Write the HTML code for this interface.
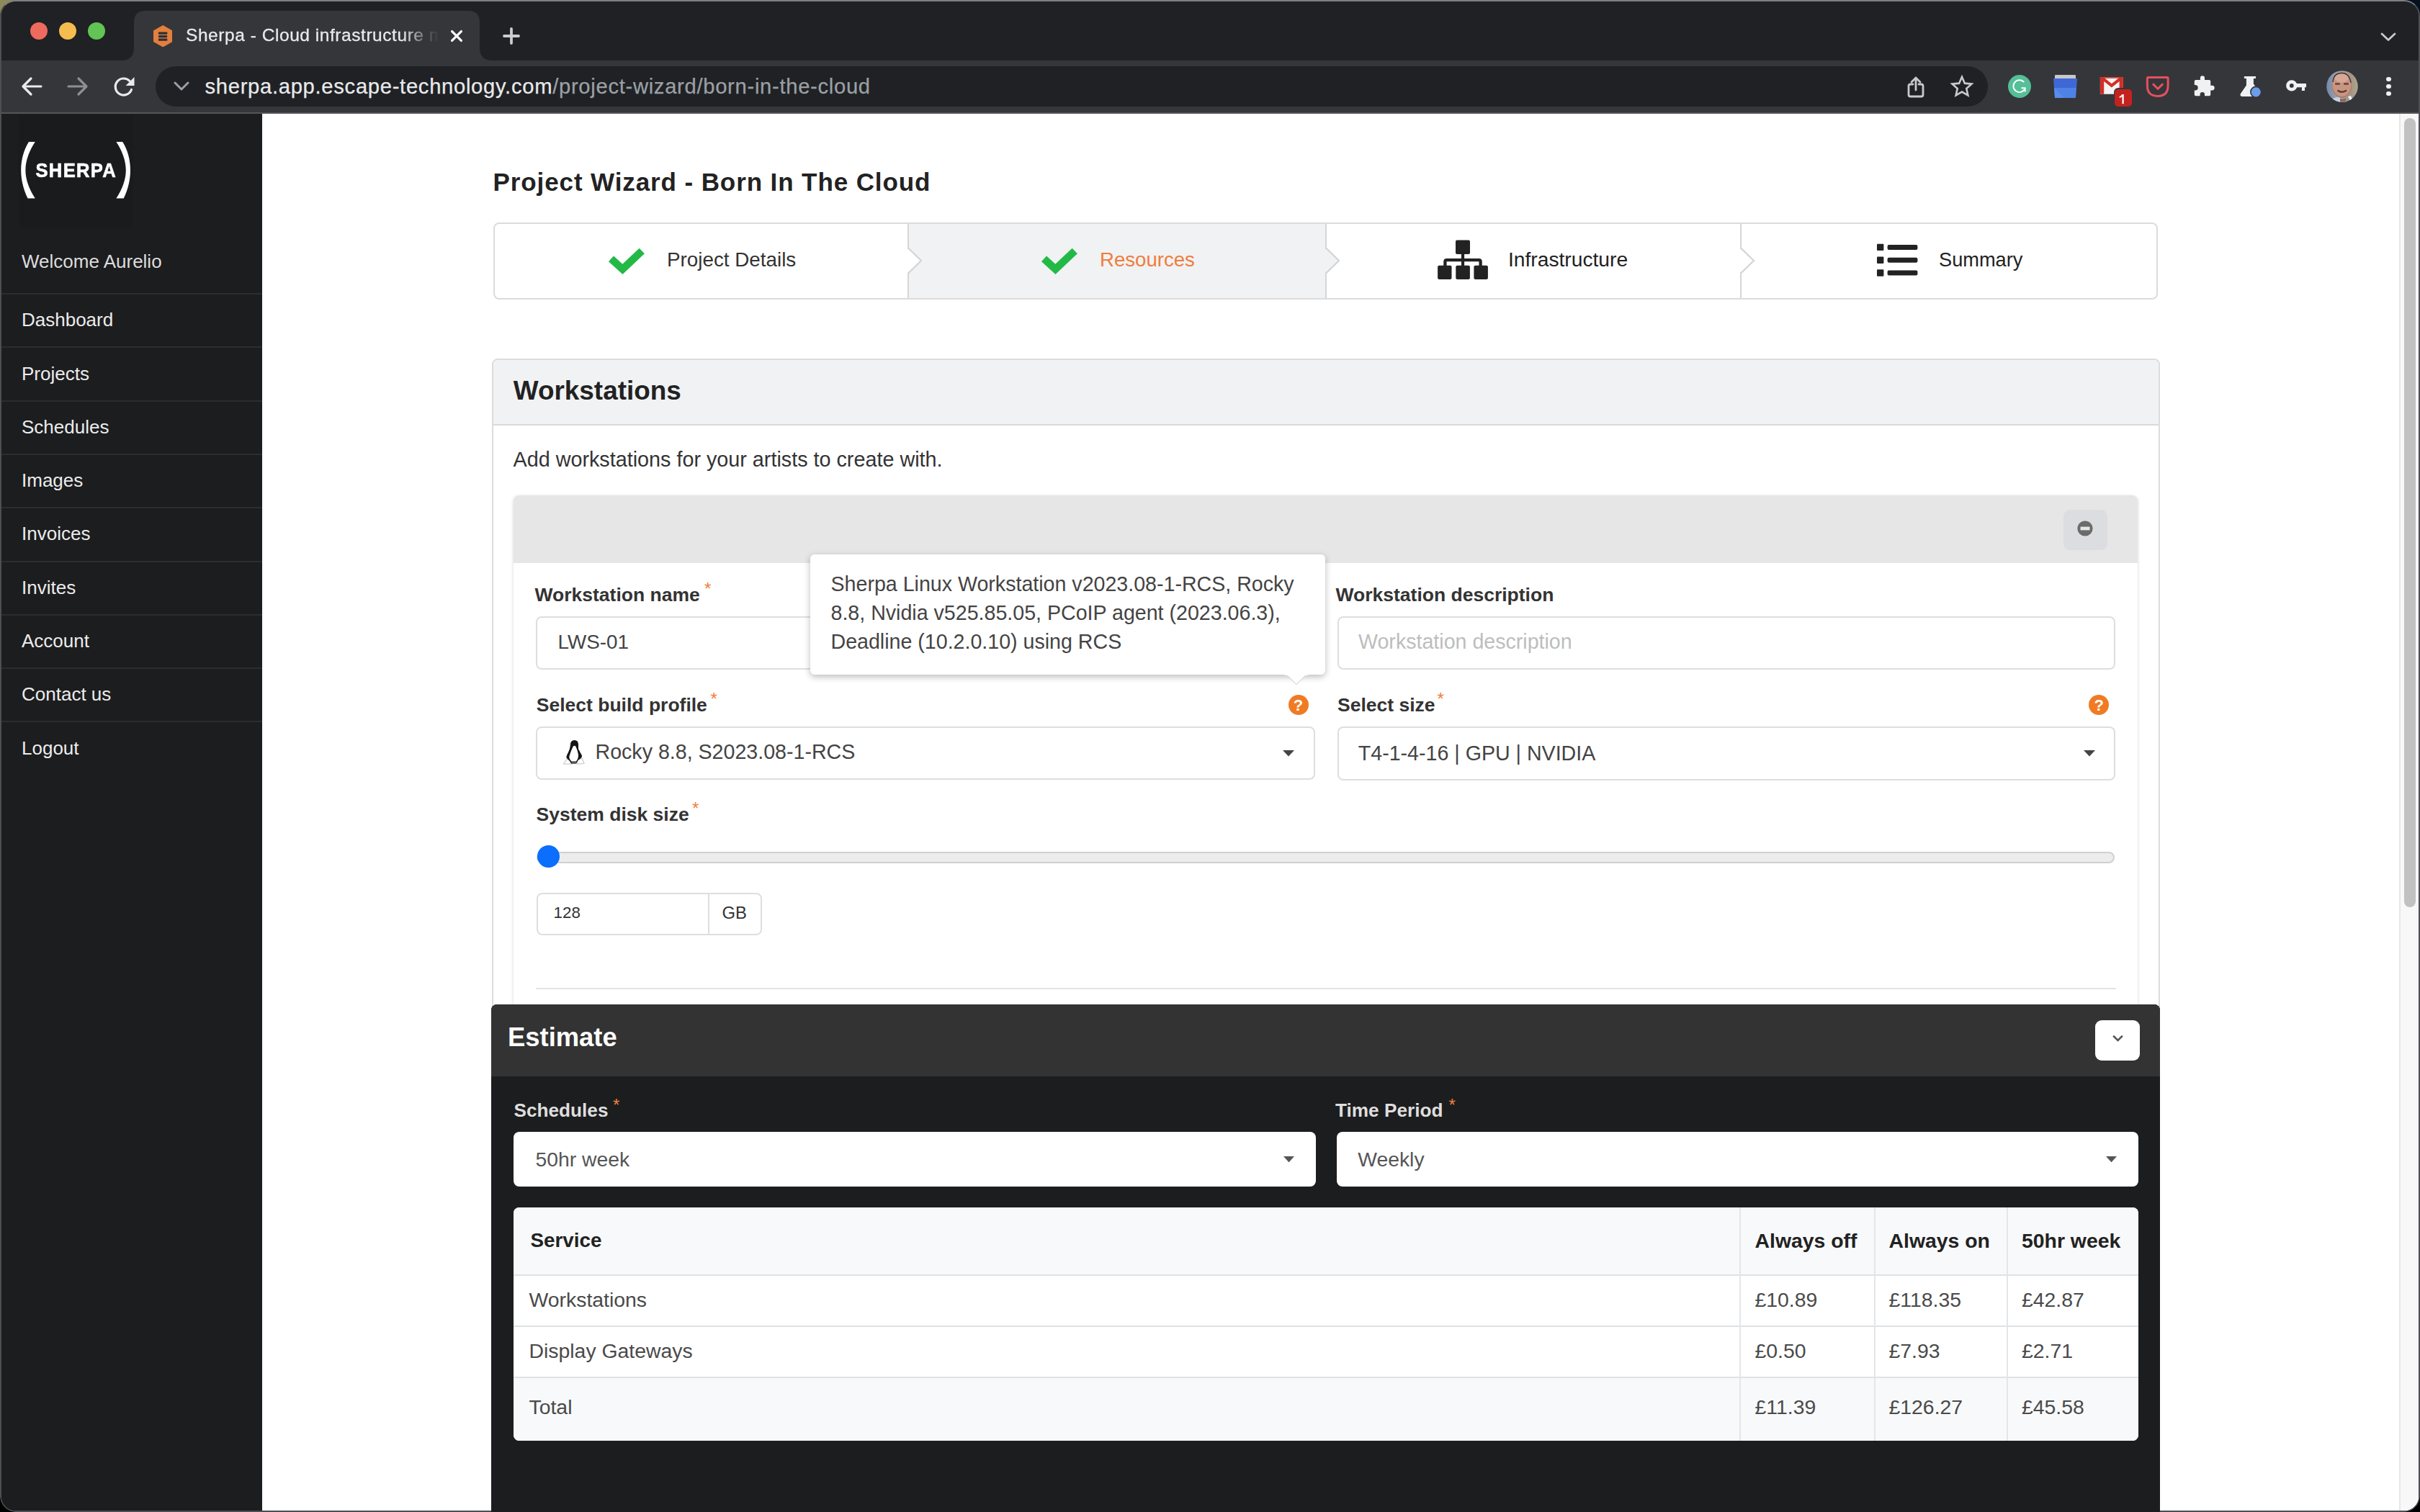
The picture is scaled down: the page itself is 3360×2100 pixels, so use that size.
<!DOCTYPE html>
<html><head><meta charset="utf-8"><title>Sherpa - Project Wizard</title>
<style>
html,body{margin:0;padding:0;width:3360px;height:2100px;overflow:hidden;background:#000}
.r{position:absolute;display:block}
.t{position:absolute;white-space:nowrap;line-height:1;font-family:"Liberation Sans",sans-serif}
</style></head><body>
<div class="r" style="left:0.0px;top:0.0px;width:60.0px;height:60.0px;background:#8c8a5c"></div>
<div class="r" style="left:3300.0px;top:0.0px;width:60.0px;height:60.0px;background:#06101e"></div>
<div class="r" style="left:0.0px;top:0.0px;width:3360.0px;height:2100.0px;border-radius:22px;background:#35363a;border:2px solid #4e4f52;border-top-color:#7e7f82;box-sizing:border-box;overflow:hidden"></div>
<div class="r" style="left:2.0px;top:2.0px;width:3356.0px;height:82.0px;background:#202124;border-radius:20px 20px 0 0"></div>
<div class="r" style="left:41.8px;top:30.8px;width:24.4px;height:24.4px;background:#ee6a5f;border-radius:50%"></div>
<div class="r" style="left:81.8px;top:30.8px;width:24.4px;height:24.4px;background:#f5bd4f;border-radius:50%"></div>
<div class="r" style="left:121.8px;top:30.8px;width:24.4px;height:24.4px;background:#61c454;border-radius:50%"></div>
<svg class="r" style="left:168.0px;top:15.0px;" width="516.0" height="69.0" viewBox="0 0 516 69" preserveAspectRatio="none"><path d="M0 69 Q18 69 18 51 L18 16 Q18 0 34 0 L482 0 Q498 0 498 16 L498 51 Q498 69 516 69 Z" fill="#35363a"/></svg>
<svg class="r" style="left:212.8px;top:34.8px;" width="26.5" height="30.5" viewBox="0 0 26.5 30.5" preserveAspectRatio="none"><path d="M13.25 0 L26.5 7.6 L26.5 22.9 L13.25 30.5 L0 22.9 L0 7.6 Z" fill="#e47f3c"/><rect x="6.9" y="9.6" width="12.4" height="3.1" rx="0.8" fill="#2b313a"/><rect x="6.9" y="14.1" width="12.4" height="3.1" rx="1.5" fill="#2b313a"/><rect x="6.9" y="18.6" width="12.4" height="3.1" rx="0.8" fill="#2b313a"/></svg>
<div class="t" style="left:258.0px;top:37.3px;font-size:24.5px;color:#e8eaed;font-weight:400;letter-spacing:0.55px;-webkit-text-stroke:0.3px #e8eaed;width:352px;overflow:hidden;-webkit-mask-image:linear-gradient(90deg,#000 0,#000 300px,rgba(0,0,0,0.25) 335px,transparent 352px)">Sherpa - Cloud infrastructure m</div>
<svg class="r" style="left:624.0px;top:40.0px;" width="20.0" height="20.0" viewBox="0 0 20 20" preserveAspectRatio="none"><path d="M3.6 3.6 L16.4 16.4 M16.4 3.6 L3.6 16.4" stroke="#f6f7f8" stroke-width="3.3" stroke-linecap="round"/></svg>
<svg class="r" style="left:696.0px;top:36.0px;" width="28.0" height="28.0" viewBox="0 0 28 28" preserveAspectRatio="none"><path d="M14 4 V24 M4 14 H24" stroke="#c9ccd0" stroke-width="3.8" stroke-linecap="round"/></svg>
<svg class="r" style="left:3304.0px;top:44.0px;" width="24.0" height="14.0" viewBox="0 0 24 14" preserveAspectRatio="none"><path d="M3 3 L12 11.5 L21 3" stroke="#c8c9cc" stroke-width="2.8" fill="none" stroke-linecap="round" stroke-linejoin="round"/></svg>
<div class="r" style="left:2.0px;top:84.0px;width:3356.0px;height:72.0px;background:#35363a"></div>
<div class="r" style="left:2.0px;top:156.0px;width:3356.0px;height:2.0px;background:#55565a"></div>
<svg class="r" style="left:28.0px;top:104.0px;" width="32.0" height="32.0" viewBox="0 0 32 32" preserveAspectRatio="none"><path d="M29 16 H5 M15 5 L4 16 L15 27" stroke="#e8eaed" stroke-width="3.2" fill="none" stroke-linecap="round" stroke-linejoin="round"/></svg>
<svg class="r" style="left:92.0px;top:104.0px;" width="32.0" height="32.0" viewBox="0 0 32 32" preserveAspectRatio="none"><path d="M3 16 H27 M17 5 L28 16 L17 27" stroke="#8e8f92" stroke-width="3.2" fill="none" stroke-linecap="round" stroke-linejoin="round"/></svg>
<svg class="r" style="left:156.0px;top:104.0px;" width="34.0" height="32.0" viewBox="0 0 34 32" preserveAspectRatio="none"><path d="M26.5 20.5 A11.5 11.5 0 1 1 24 8.5" stroke="#e8eaed" stroke-width="3.2" fill="none" stroke-linecap="round"/><path d="M30.5 3 L30.5 15 L18.5 15 Z" fill="#e8eaed"/></svg>
<div class="r" style="left:216.0px;top:92.0px;width:2544.0px;height:56.0px;background:#202124;border-radius:28px"></div>
<svg class="r" style="left:240.0px;top:112.0px;" width="24.0" height="16.0" viewBox="0 0 24 16" preserveAspectRatio="none"><path d="M3 3 L12 12 L21 3" stroke="#9aa0a6" stroke-width="3" fill="none" stroke-linecap="round" stroke-linejoin="round"/></svg>
<div class="t" style="left:284.5px;top:105.5px;font-size:29.2px;color:#e8eaed;letter-spacing:0.7px;-webkit-text-stroke:0.25px currentColor">sherpa.app.escape-technology.com<span style="color:#9aa0a6">/project-wizard/born-in-the-cloud</span></div>
<svg class="r" style="left:2646.0px;top:104.0px;" width="28.0" height="34.0" viewBox="0 0 28 34" preserveAspectRatio="none"><path d="M14 4 V21 M8 10 L14 4 L20 10" stroke="#c8c9cc" stroke-width="2.8" fill="none" stroke-linecap="round" stroke-linejoin="round"/><path d="M10 13 H6.5 Q4 13 4 15.5 V27.5 Q4 30 6.5 30 H21.5 Q24 30 24 27.5 V15.5 Q24 13 21.5 13 H18" stroke="#c8c9cc" stroke-width="2.8" fill="none" stroke-linecap="round"/></svg>
<svg class="r" style="left:2707.0px;top:103.0px;" width="34.0" height="33.0" viewBox="0 0 34 33" preserveAspectRatio="none"><path d="M17.00 3.80 L20.88 12.66 L30.51 13.61 L23.28 20.04 L25.35 29.49 L17.00 24.60 L8.65 29.49 L10.72 20.04 L3.49 13.61 L13.12 12.66 Z" stroke="#c8c9cc" stroke-width="2.6" fill="none" stroke-linejoin="miter" stroke-miterlimit="3"/></svg>
<div class="r" style="left:2788.0px;top:104.0px;width:32.4px;height:32.4px;background:#55bf97;border-radius:50%"></div>
<svg class="r" style="left:2788.0px;top:104.0px;" width="32.0" height="32.0" viewBox="0 0 32 32" preserveAspectRatio="none"><path d="M22.2 10.2 A8.4 8.4 0 1 0 23.3 19.5" stroke="#fff" stroke-width="1.9" fill="none"/><path d="M18.5 18.3 H23.7 V23.5" stroke="#fff" stroke-width="1.9" fill="none"/></svg>
<svg class="r" style="left:2851.0px;top:103.0px;" width="34.0" height="34.0" viewBox="0 0 34 34" preserveAspectRatio="none"><rect x="2" y="1" width="29" height="6" rx="1" fill="#c8c8c8"/><path d="M0 6 H33 L32 20 H1 Z" fill="#3f68d6"/><path d="M1 19 H32 L31 33 H2 Z" fill="#4f82e6"/><path d="M1 19 L15 33 H2 Z" fill="#5a8ff0" opacity="0.8"/></svg>
<svg class="r" style="left:2905.0px;top:98.0px;" width="48.0" height="40.0" viewBox="0 0 48 40" preserveAspectRatio="none"><rect x="10.9" y="9.2" width="32" height="23.5" fill="#f4f4f4"/><path d="M10.9 9.2 H16.2 V32.7 H10.9 Z M37.6 9.2 H42.9 V32.7 H37.6 Z" fill="#d32f25"/><path d="M14 10.7 L26.9 20.8 L39.8 10.7" stroke="#d32f25" stroke-width="4.2" fill="none"/><path d="M11 10 H42.8" stroke="#d32f25" stroke-width="1.6"/></svg>
<div class="r" style="left:2934.5px;top:122.3px;width:26.8px;height:27.0px;background:#35363a;border-radius:6px"></div>
<div class="r" style="left:2936.0px;top:123.8px;width:23.8px;height:24.0px;background:#c5221f;border-radius:5px"></div>
<svg class="r" style="left:2940.0px;top:129.0px;" width="12.0" height="19.0" viewBox="0 0 12 19" preserveAspectRatio="none"><path d="M6.5 2 H8.7 V15.2 H6.5 V5 Q5 6.4 2.7 7 V5 Q5.3 4.1 6.5 2 Z" fill="#fff"/></svg>
<svg class="r" style="left:2978.0px;top:104.0px;" width="36.0" height="34.0" viewBox="0 0 36 34" preserveAspectRatio="none"><path d="M4.5 3.4 H31 Q32.1 3.4 32.1 4.5 V15 Q32.1 29.4 17.75 29.4 Q3.4 29.4 3.4 15 V4.5 Q3.4 3.4 4.5 3.4 Z" stroke="#e5505e" stroke-width="3" fill="none"/><path d="M11.8 13.1 L18 19.3 L24.4 13.1" stroke="#e5505e" stroke-width="3" fill="none" stroke-linecap="round" stroke-linejoin="round"/></svg>
<svg class="r" style="left:3036.0px;top:98.0px;" width="44.0" height="44.0" viewBox="0 0 44 44" preserveAspectRatio="none"><path d="M12.8 13.1 H18.9 V10.35 A3.05 3.05 0 0 1 25 10.35 V13.1 H31.2 Q33.2 13.1 33.2 15.1 V20.7 H35.35 A3.35 3.35 0 0 1 35.35 27.4 H33.2 V33.2 Q33.2 35.2 31.2 35.2 H25 V33.2 A3.2 3.2 0 0 0 18.6 33.2 V35.2 H12.8 Q10.8 35.2 10.8 33.2 V27.6 H11.9 A3.8 3.8 0 0 0 11.9 20 H10.8 V15.1 Q10.8 13.1 12.8 13.1 Z" fill="#f0f1f3"/></svg>
<svg class="r" style="left:3109.0px;top:105.0px;" width="34.0" height="32.0" viewBox="0 0 34 32" preserveAspectRatio="none"><path d="M6.9 1 H23 V4.1 H19.9 V11.6 L24.5 18 Q20 21 21.6 28.9 H4.5 Q0.5 28.9 1.8 25.2 L9.9 13.5 V4.1 H6.9 Z" fill="#f0f1f3"/><circle cx="23.2" cy="22.8" r="7.4" fill="#6c9cec" stroke="#35363a" stroke-width="1.6"/></svg>
<svg class="r" style="left:3172.0px;top:108.0px;" width="32.0" height="22.0" viewBox="0 0 32 22" preserveAspectRatio="none"><circle cx="9.8" cy="10.9" r="5.3" stroke="#f0f1f3" stroke-width="4.8" fill="none"/><path d="M14 8 H30 V13.2 H28 V18 H23.9 V13.2 H14 Z" fill="#f0f1f3"/></svg>
<svg class="r" style="left:3230.0px;top:98.0px;" width="44.0" height="44.0" viewBox="0 0 44 44" preserveAspectRatio="none"><defs><clipPath id="av"><circle cx="22" cy="22" r="21.8"/></clipPath><linearGradient id="avbg" x1="0" y1="0" x2="1" y2="0"><stop offset="0" stop-color="#7088ae"/><stop offset="0.35" stop-color="#a3a2a3"/><stop offset="0.75" stop-color="#a39487"/><stop offset="1" stop-color="#b0a58a"/></linearGradient></defs><g clip-path="url(#av)"><rect width="44" height="44" fill="url(#avbg)"/><path d="M3 44 Q10 36 18 37 L30 44 Z" fill="#c3d2e8"/><path d="M30 36 L34 44 H38 L34 35 Z" fill="#f0f0f0"/><ellipse cx="21.5" cy="20.5" rx="13.8" ry="17.5" fill="#a87a66"/><ellipse cx="21.5" cy="19.5" rx="13" ry="16.5" fill="#c89582"/><ellipse cx="21" cy="10" rx="9.5" ry="6.5" fill="#dcad9b" opacity="0.8"/><path d="M9 16 Q10 3 22 3.5 Q32 4 34 17" stroke="#3c3230" stroke-width="1.3" fill="none"/><rect x="12" y="17.2" width="7" height="2.6" rx="1.2" fill="#5e4338"/><rect x="24" y="17.2" width="7" height="2.6" rx="1.2" fill="#5e4338"/><path d="M15.5 27.5 Q21.5 32 28 27.5" stroke="#5a3c36" stroke-width="2.4" fill="none"/><path d="M19 38 Q22 41 27 38 V44 H19 Z" fill="#8c6a5c"/></g></svg>
<div class="r" style="left:3313.0px;top:106.7px;width:6.6px;height:6.6px;background:#f0f1f3;border-radius:50%"></div>
<div class="r" style="left:3313.0px;top:116.7px;width:6.6px;height:6.6px;background:#f0f1f3;border-radius:50%"></div>
<div class="r" style="left:3313.0px;top:126.7px;width:6.6px;height:6.6px;background:#f0f1f3;border-radius:50%"></div>
<div class="r" style="left:2.0px;top:158.0px;width:362.0px;height:1940.0px;background:#1c1d1f"></div>
<div class="r" style="left:26.0px;top:159.0px;width:159.0px;height:157.0px;background:#1a1b1d"></div>
<svg class="r" style="left:0.0px;top:0.0px;" width="220.0" height="330.0" viewBox="0 0 220 330" preserveAspectRatio="none"><path d="M40 197 C33 208 29.2 222 29.2 236.3 C29.2 251 33 264 38.5 275.6 L48.8 275.6 C41.5 264 35.4 251 35.4 236.3 C35.4 222 41.5 208 48.8 197 Z" fill="#fff"/><path d="M170.2 197 C177.2 208 181 222 181 236.3 C181 251 177.2 264 171.7 275.6 L161.4 275.6 C168.7 264 174.8 251 174.8 236.3 C174.8 222 168.7 208 161.4 197 Z" fill="#fff"/></svg>
<div class="t" style="left:49.5px;top:225.3px;font-size:25.6px;color:#fff;font-weight:700;letter-spacing:1.3px;-webkit-text-stroke:0.6px #fff;transform:scaleY(1.1);transform-origin:0 83%">SHERPA</div>
<div class="t" style="left:30.0px;top:350.0px;font-size:26px;color:#dcdcdc;font-weight:400;">Welcome Aurelio</div>
<div class="r" style="left:2.0px;top:407.0px;width:362.0px;height:2.0px;background:#2c2d30"></div>
<div class="r" style="left:2.0px;top:481.3px;width:362.0px;height:2.0px;background:#2c2d30"></div>
<div class="r" style="left:2.0px;top:555.6px;width:362.0px;height:2.0px;background:#2c2d30"></div>
<div class="r" style="left:2.0px;top:629.9px;width:362.0px;height:2.0px;background:#2c2d30"></div>
<div class="r" style="left:2.0px;top:704.2px;width:362.0px;height:2.0px;background:#2c2d30"></div>
<div class="r" style="left:2.0px;top:778.5px;width:362.0px;height:2.0px;background:#2c2d30"></div>
<div class="r" style="left:2.0px;top:852.8px;width:362.0px;height:2.0px;background:#2c2d30"></div>
<div class="r" style="left:2.0px;top:927.1px;width:362.0px;height:2.0px;background:#2c2d30"></div>
<div class="r" style="left:2.0px;top:1001.4px;width:362.0px;height:2.0px;background:#2c2d30"></div>
<div class="t" style="left:30.0px;top:431.2px;font-size:26px;color:#ececec;font-weight:400;">Dashboard</div>
<div class="t" style="left:30.0px;top:505.5px;font-size:26px;color:#ececec;font-weight:400;">Projects</div>
<div class="t" style="left:30.0px;top:579.8px;font-size:26px;color:#ececec;font-weight:400;">Schedules</div>
<div class="t" style="left:30.0px;top:654.1px;font-size:26px;color:#ececec;font-weight:400;">Images</div>
<div class="t" style="left:30.0px;top:728.4px;font-size:26px;color:#ececec;font-weight:400;">Invoices</div>
<div class="t" style="left:30.0px;top:802.7px;font-size:26px;color:#ececec;font-weight:400;">Invites</div>
<div class="t" style="left:30.0px;top:877.0px;font-size:26px;color:#ececec;font-weight:400;">Account</div>
<div class="t" style="left:30.0px;top:951.3px;font-size:26px;color:#ececec;font-weight:400;">Contact us</div>
<div class="t" style="left:30.0px;top:1025.6px;font-size:26px;color:#ececec;font-weight:400;">Logout</div>
<div class="r" style="left:364.0px;top:158.0px;width:2967.0px;height:1940.0px;background:#fff"></div>
<div class="r" style="left:3331.0px;top:158.0px;width:27.0px;height:1940.0px;background:#f8f8f8;border-left:2px solid #e6e6e6;box-sizing:border-box"></div>
<div class="r" style="left:3338.0px;top:164.0px;width:16.0px;height:1096.0px;background:#c1c1c1;border-radius:8px"></div>
<div class="t" style="left:684.5px;top:235.4px;font-size:35px;color:#222;font-weight:700;letter-spacing:0.9px">Project Wizard - Born In The Cloud</div>
<div class="r" style="left:684.5px;top:308.5px;width:2311.5px;height:107.0px;border:2px solid #dcdcdc;border-radius:8px;background:#fff;box-sizing:border-box"></div>
<div class="r" style="left:1261.0px;top:310.5px;width:579.5px;height:103.0px;background:#f1f2f4"></div>
<div class="r" style="left:1260.0px;top:310.5px;width:2.0px;height:103.0px;background:#d6d6d6"></div>
<div class="r" style="left:1839.5px;top:310.5px;width:2.0px;height:103.0px;background:#d6d6d6"></div>
<div class="r" style="left:2416.0px;top:310.5px;width:2.0px;height:103.0px;background:#d6d6d6"></div>
<svg class="r" style="left:1259.0px;top:342.0px;" width="24.0" height="40.0" viewBox="0 0 24 40" preserveAspectRatio="none"><path d="M2 0 L2 2.5 L20 20 L2 37.5 L2 40" stroke="#d6d6d6" stroke-width="2" fill="#fff"/><path d="M0 2.5 L18 20 L0 37.5 Z" fill="#fff"/><path d="M2 2.5 L20 20 L2 37.5" stroke="#d6d6d6" stroke-width="2" fill="none"/></svg>
<svg class="r" style="left:1838.5px;top:342.0px;" width="24.0" height="40.0" viewBox="0 0 24 40" preserveAspectRatio="none"><path d="M2 0 L2 2.5 L20 20 L2 37.5 L2 40" stroke="#d6d6d6" stroke-width="2" fill="#f1f2f4"/><path d="M0 2.5 L18 20 L0 37.5 Z" fill="#f1f2f4"/><path d="M2 2.5 L20 20 L2 37.5" stroke="#d6d6d6" stroke-width="2" fill="none"/></svg>
<svg class="r" style="left:2415.0px;top:342.0px;" width="24.0" height="40.0" viewBox="0 0 24 40" preserveAspectRatio="none"><path d="M2 0 L2 2.5 L20 20 L2 37.5 L2 40" stroke="#d6d6d6" stroke-width="2" fill="#fff"/><path d="M0 2.5 L18 20 L0 37.5 Z" fill="#fff"/><path d="M2 2.5 L20 20 L2 37.5" stroke="#d6d6d6" stroke-width="2" fill="none"/></svg>
<svg class="r" style="left:830.0px;top:330.0px;" width="80.0" height="65.0" viewBox="0 0 80 65" preserveAspectRatio="none"><path d="M18.5 29.45 L34.4 43.85 L61.25 18.5" stroke="#23b947" stroke-width="10.5" fill="none" stroke-linejoin="miter"/></svg>
<svg class="r" style="left:1431.0px;top:330.0px;" width="80.0" height="65.0" viewBox="0 0 80 65" preserveAspectRatio="none"><path d="M18.5 29.45 L34.4 43.85 L61.25 18.5" stroke="#23b947" stroke-width="10.5" fill="none" stroke-linejoin="miter"/></svg>
<div class="t" style="left:926.0px;top:346.5px;font-size:27.8px;color:#333;font-weight:400;">Project Details</div>
<div class="t" style="left:1527.0px;top:346.6px;font-size:27.6px;color:#f07d3c;font-weight:400;">Resources</div>
<svg class="r" style="left:1994.5px;top:333.0px;" width="73.0" height="56.0" viewBox="0 0 73 56" preserveAspectRatio="none"><rect x="26" y="0.5" width="20" height="19.5" rx="2" fill="#222"/><rect x="33.9" y="19" width="4.2" height="17" fill="#222"/><path d="M11.4 36 V30.5 Q11.4 28.2 13.7 28.2 H58.3 Q60.6 28.2 60.6 30.5 V36" stroke="#222" stroke-width="4.3" fill="none"/><rect x="1.1" y="35.7" width="19.4" height="19.3" rx="2" fill="#222"/><rect x="26.3" y="35.7" width="19.6" height="19.3" rx="2" fill="#222"/><rect x="51.4" y="35.7" width="19.5" height="19.3" rx="2" fill="#222"/></svg>
<div class="t" style="left:2094.0px;top:346.1px;font-size:28.2px;color:#222;font-weight:400;">Infrastructure</div>
<svg class="r" style="left:2605.0px;top:337.5px;" width="58.0" height="47.0" viewBox="0 0 58 47" preserveAspectRatio="none"><rect x="1" y="0.7" width="9.4" height="9.4" rx="1" fill="#222"/><rect x="1" y="18.5" width="9.4" height="9.4" rx="1" fill="#222"/><rect x="1" y="36.3" width="9.4" height="9.4" rx="1" fill="#222"/><rect x="15.6" y="2" width="41.8" height="7" rx="2" fill="#222"/><rect x="15.6" y="19.8" width="41.8" height="7" rx="2" fill="#222"/><rect x="15.6" y="37.6" width="41.8" height="7" rx="2" fill="#222"/></svg>
<div class="t" style="left:2692.0px;top:347.0px;font-size:27.2px;color:#222;font-weight:400;">Summary</div>
<div class="r" style="left:682.5px;top:498.0px;width:2316.3px;height:1702.0px;border:2px solid #dcdcdc;border-radius:8px;background:#fff;box-sizing:border-box"></div>
<div class="r" style="left:684.5px;top:500.0px;width:2312.3px;height:90.0px;background:#f1f2f4;border-radius:6px 6px 0 0"></div>
<div class="r" style="left:684.5px;top:589.0px;width:2312.3px;height:2.0px;background:#d9d9d9"></div>
<div class="t" style="left:712.8px;top:524.8px;font-size:36.9px;color:#222;font-weight:700;">Workstations</div>
<div class="t" style="left:712.5px;top:623.7px;font-size:28.75px;color:#333;font-weight:400;">Add workstations for your artists to create with.</div>
<div class="r" style="left:713.0px;top:688.0px;width:2255.0px;height:1512.0px;border-radius:8px;background:#fff;box-shadow:0 1px 4px rgba(0,0,0,0.18)"></div>
<div class="r" style="left:713.0px;top:688.0px;width:2255.0px;height:94.0px;background:#e6e6e6;border-radius:8px 8px 0 0"></div>
<div class="r" style="left:2864.5px;top:708.0px;width:61.0px;height:56.0px;background:#dcdde0;border-radius:9px"></div>
<svg class="r" style="left:2884.0px;top:723.0px;" width="22.0" height="22.0" viewBox="0 0 22 22" preserveAspectRatio="none"><circle cx="11" cy="11" r="10.6" fill="#6b6b6b"/><rect x="4.5" y="8.6" width="13" height="4.8" fill="#e6e6e6"/></svg>
<div class="t" style="left:742.5px;top:812.6px;font-size:26.5px;color:#333;font-weight:700;">Workstation name</div>
<div class="t" style="left:978.0px;top:805.7px;font-size:24px;color:#f0803c;font-weight:400;">*</div>
<div class="r" style="left:743.8px;top:855.7px;width:1080.4px;height:74.8px;border:2px solid #dedede;border-radius:8px;background:#fff;box-sizing:border-box"></div>
<div class="t" style="left:774.5px;top:878.0px;font-size:27.8px;color:#444;font-weight:400;">LWS-01</div>
<div class="t" style="left:1854.5px;top:812.6px;font-size:26.5px;color:#333;font-weight:700;">Workstation description</div>
<div class="r" style="left:1857.0px;top:856.0px;width:1080.0px;height:74.4px;border:2px solid #dedede;border-radius:8px;background:#fff;box-sizing:border-box"></div>
<div class="t" style="left:1886.0px;top:877.2px;font-size:28.6px;color:#bdbdbd;font-weight:400;">Workstation description</div>
<div class="t" style="left:744.8px;top:965.6px;font-size:26.5px;color:#333;font-weight:700;">Select build profile</div>
<div class="t" style="left:986.5px;top:958.7px;font-size:24px;color:#f0803c;font-weight:400;">*</div>
<div class="r" style="left:1788.5px;top:965.3px;width:28.0px;height:28.0px;background:#f07b23;border-radius:50%"></div>
<div class="t" style="left:1795.8px;top:969.0px;font-size:22px;color:#fff;font-weight:700;">?</div>
<div class="r" style="left:744.3px;top:1008.7px;width:1082.1px;height:74.8px;border:2px solid #dedede;border-radius:8px;background:#fff;box-sizing:border-box"></div>
<svg class="r" style="left:770.0px;top:1020.0px;" width="60.0" height="50.0" viewBox="0 0 60 50" preserveAspectRatio="none"><path d="M12.5 41 L17 34.5 L22.5 36 L24 41.2 Z" fill="#fff" stroke="#c8c8c8" stroke-width="1.2"/><path d="M31.5 36 L38 33 L41 40.5 L31 41.2 Z" fill="#fff" stroke="#c8c8c8" stroke-width="1.2"/><path d="M27.5 8 Q22 8 22 14.5 Q21.5 20 19 25 Q16 30 16.5 32.5 L21 37 L23 40.5 L30 40.5 L33 35.5 Q38.5 32.5 38 29.5 Q35 24 33 20 Q33 16 33 14 Q33 8 27.5 8 Z" fill="#151515"/><path d="M25.8 16.5 Q27.5 15 29.3 16.5 Q32 22 33 28 Q33.5 33 30 37.5 L23.5 37.5 Q19.5 33.5 20.5 30 Q23 22 25.8 16.5 Z" fill="#fff"/><path d="M23.5 38 L30 38 L30 40.5 L23.5 40.5 Z" fill="#555"/></svg>
<div class="t" style="left:826.5px;top:1030.1px;font-size:28.6px;color:#444;font-weight:400;">Rocky 8.8, S2023.08-1-RCS</div>
<svg class="r" style="left:1781.0px;top:1042.0px;" width="16.0" height="8.5" viewBox="0 0 16 8.5" preserveAspectRatio="none"><path d="M0 0 H16 L8 8.5 Z" fill="#444"/></svg>
<div class="t" style="left:1857.0px;top:965.6px;font-size:26.5px;color:#333;font-weight:700;">Select size</div>
<div class="t" style="left:1995.5px;top:958.7px;font-size:24px;color:#f0803c;font-weight:400;">*</div>
<div class="r" style="left:2900.2px;top:965.4px;width:28.0px;height:28.0px;background:#f07b23;border-radius:50%"></div>
<div class="t" style="left:2907.5px;top:969.1px;font-size:22px;color:#fff;font-weight:700;">?</div>
<div class="r" style="left:1857.0px;top:1008.7px;width:1080.0px;height:75.0px;border:2px solid #dedede;border-radius:8px;background:#fff;box-sizing:border-box"></div>
<div class="t" style="left:1885.8px;top:1031.5px;font-size:28.6px;color:#444;font-weight:400;">T4-1-4-16 | GPU | NVIDIA</div>
<svg class="r" style="left:2892.6px;top:1042.3px;" width="16.0" height="8.5" viewBox="0 0 16 8.5" preserveAspectRatio="none"><path d="M0 0 H16 L8 8.5 Z" fill="#444"/></svg>
<div class="t" style="left:744.6px;top:1118.1px;font-size:26.5px;color:#333;font-weight:700;">System disk size</div>
<div class="t" style="left:961.0px;top:1111.2px;font-size:24px;color:#f0803c;font-weight:400;">*</div>
<div class="r" style="left:745.0px;top:1182.5px;width:2191.0px;height:16.0px;background:#ececec;border:2px solid #d0d0d0;border-radius:8px;box-sizing:border-box"></div>
<div class="r" style="left:745.6px;top:1173.6px;width:31.4px;height:31.4px;background:#0b6efd;border-radius:50%"></div>
<div class="r" style="left:744.5px;top:1240.2px;width:313.5px;height:59.0px;border:2px solid #dedede;border-radius:8px;background:#fff;box-sizing:border-box"></div>
<div class="r" style="left:982.6px;top:1242.2px;width:2.0px;height:55.0px;background:#dedede"></div>
<div class="t" style="left:768.5px;top:1257.0px;font-size:22.4px;color:#333;font-weight:400;">128</div>
<div class="t" style="left:1002.5px;top:1255.9px;font-size:23.8px;color:#333;font-weight:400;">GB</div>
<div class="r" style="left:743.5px;top:1372.0px;width:2194.5px;height:2.0px;background:#e3e3e3"></div>
<div class="r" style="left:1125.0px;top:770.3px;width:715.0px;height:166.9px;background:#fff;border-radius:6px;box-shadow:0 3px 10px rgba(0,0,0,0.27)"></div>
<svg class="r" style="left:1784.0px;top:936.0px;" width="32.0" height="16.0" viewBox="0 0 32 16" preserveAspectRatio="none"><path d="M0 0 L16 14.5 L32 0 Z" fill="#fff"/><path d="M2 1 L16 14.5 L30 1" stroke="rgba(0,0,0,0.12)" stroke-width="1.5" fill="none"/></svg>
<div class="r" style="left:1784.0px;top:933.0px;width:32.0px;height:5.0px;background:#fff"></div>
<div class="t" style="left:1153.5px;top:796.8px;font-size:28.6px;color:#444;font-weight:400;">Sherpa Linux Workstation v2023.08-1-RCS, Rocky</div>
<div class="t" style="left:1153.5px;top:836.7px;font-size:28.6px;color:#444;font-weight:400;">8.8, Nvidia v525.85.05, PCoIP agent (2023.06.3),</div>
<div class="t" style="left:1153.5px;top:876.6px;font-size:28.6px;color:#444;font-weight:400;">Deadline (10.2.0.10) using RCS</div>
<div class="r" style="left:681.5px;top:1394.5px;width:2317.8px;height:805.5px;background:#1c1d1f;border-radius:8px 8px 0 0"></div>
<div class="r" style="left:681.5px;top:1394.5px;width:2317.8px;height:100.5px;background:#333;border-radius:8px 8px 0 0"></div>
<div class="t" style="left:705.0px;top:1423.4px;font-size:36.4px;color:#fff;font-weight:700;">Estimate</div>
<div class="r" style="left:2909.2px;top:1416.5px;width:61.7px;height:56.6px;background:#fff;border-radius:9px"></div>
<svg class="r" style="left:2932.0px;top:1436.0px;" width="17.0" height="13.0" viewBox="0 0 17 13" preserveAspectRatio="none"><path d="M3 3.5 L8.5 9 L14 3.5" stroke="#555" stroke-width="2.5" fill="none" stroke-linecap="square"/></svg>
<div class="t" style="left:713.5px;top:1529.1px;font-size:26.2px;color:#dedede;font-weight:700;">Schedules</div>
<div class="t" style="left:851.0px;top:1522.7px;font-size:24px;color:#f0803c;font-weight:400;">*</div>
<div class="r" style="left:712.8px;top:1571.8px;width:1114.0px;height:76.0px;background:#fff;border-radius:8px"></div>
<div class="t" style="left:743.5px;top:1595.8px;font-size:28.3px;color:#555;font-weight:400;">50hr week</div>
<svg class="r" style="left:1781.6px;top:1605.6px;" width="15.0" height="8.3" viewBox="0 0 15 8.3" preserveAspectRatio="none"><path d="M0 0 H15 L7.5 8.3 Z" fill="#555"/></svg>
<div class="t" style="left:1854.0px;top:1529.1px;font-size:26.2px;color:#dedede;font-weight:700;">Time Period</div>
<div class="t" style="left:2011.5px;top:1522.7px;font-size:24px;color:#f0803c;font-weight:400;">*</div>
<div class="r" style="left:1856.3px;top:1571.8px;width:1112.8px;height:76.0px;background:#fff;border-radius:8px"></div>
<div class="t" style="left:1885.3px;top:1595.7px;font-size:28.3px;color:#555;font-weight:400;">Weekly</div>
<svg class="r" style="left:2923.8px;top:1605.5px;" width="15.0" height="8.3" viewBox="0 0 15 8.3" preserveAspectRatio="none"><path d="M0 0 H15 L7.5 8.3 Z" fill="#555"/></svg>
<div class="r" style="left:712.5px;top:1676.5px;width:2256.0px;height:324.5px;background:#fff;border-radius:8px;overflow:hidden"></div>
<div class="r" style="left:712.5px;top:1676.5px;width:2256.0px;height:94.9px;background:#f8f9fa;border-radius:8px 8px 0 0"></div>
<div class="r" style="left:712.5px;top:1912.5px;width:2256.0px;height:88.5px;background:#f8f9fa;border-radius:0 0 8px 8px"></div>
<div class="r" style="left:712.5px;top:1770.4px;width:2256.0px;height:2.0px;background:#dee2e6"></div>
<div class="r" style="left:712.5px;top:1840.8px;width:2256.0px;height:2.0px;background:#dee2e6"></div>
<div class="r" style="left:712.5px;top:1911.5px;width:2256.0px;height:2.0px;background:#dee2e6"></div>
<div class="r" style="left:2414.5px;top:1676.5px;width:2.0px;height:324.5px;background:#e3e6e9"></div>
<div class="r" style="left:2601.6px;top:1676.5px;width:2.0px;height:324.5px;background:#e3e6e9"></div>
<div class="r" style="left:2786.3px;top:1676.5px;width:2.0px;height:324.5px;background:#e3e6e9"></div>
<div class="t" style="left:736.5px;top:1709.2px;font-size:27.8px;color:#222;font-weight:700;">Service</div>
<div class="t" style="left:2436.5px;top:1708.7px;font-size:28.4px;color:#222;font-weight:700;">Always off</div>
<div class="t" style="left:2622.5px;top:1708.7px;font-size:28.4px;color:#222;font-weight:700;">Always on</div>
<div class="t" style="left:2807.0px;top:1708.7px;font-size:28.4px;color:#222;font-weight:700;">50hr week</div>
<div class="t" style="left:734.5px;top:1791.0px;font-size:28.4px;color:#4a4a4a;font-weight:400;">Workstations</div>
<div class="t" style="left:2436.5px;top:1791.0px;font-size:28.4px;color:#4a4a4a;font-weight:400;">£10.89</div>
<div class="t" style="left:2622.5px;top:1791.0px;font-size:28.4px;color:#4a4a4a;font-weight:400;">£118.35</div>
<div class="t" style="left:2807.0px;top:1791.0px;font-size:28.4px;color:#4a4a4a;font-weight:400;">£42.87</div>
<div class="t" style="left:734.5px;top:1861.5px;font-size:28.4px;color:#4a4a4a;font-weight:400;">Display Gateways</div>
<div class="t" style="left:2436.5px;top:1861.5px;font-size:28.4px;color:#4a4a4a;font-weight:400;">£0.50</div>
<div class="t" style="left:2622.5px;top:1861.5px;font-size:28.4px;color:#4a4a4a;font-weight:400;">£7.93</div>
<div class="t" style="left:2807.0px;top:1861.5px;font-size:28.4px;color:#4a4a4a;font-weight:400;">£2.71</div>
<div class="t" style="left:734.5px;top:1940.0px;font-size:28.4px;color:#4a4a4a;font-weight:400;">Total</div>
<div class="t" style="left:2436.5px;top:1940.0px;font-size:28.4px;color:#4a4a4a;font-weight:400;">£11.39</div>
<div class="t" style="left:2622.5px;top:1940.0px;font-size:28.4px;color:#4a4a4a;font-weight:400;">£126.27</div>
<div class="t" style="left:2807.0px;top:1940.0px;font-size:28.4px;color:#4a4a4a;font-weight:400;">£45.58</div>
<div class="r" style="left:0.0px;top:2078.0px;width:22.0px;height:22.0px;background:radial-gradient(circle at 100% 0,transparent 20px,#4e4f52 20.5px,#4e4f52 21.5px,#000 22px)"></div>
<div class="r" style="left:3338.0px;top:2078.0px;width:22.0px;height:22.0px;background:radial-gradient(circle at 0 0,transparent 20px,#4e4f52 20.5px,#4e4f52 21.5px,#000 22px)"></div>
</body></html>
